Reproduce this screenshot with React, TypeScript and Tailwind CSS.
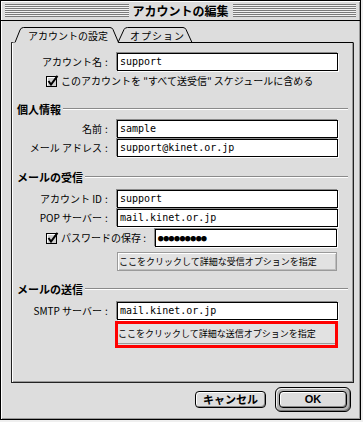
import React from "react";

function Stripes() {
  return (
    <div className="flex-1 h-[13px] [background-image:repeating-linear-gradient(to_bottom,#7a7a7a_0px,#7a7a7a_1px,#f2f2f2_1px,#f2f2f2_2px)]" />
  );
}

function Check() {
  return (
    <svg width="13" height="13" viewBox="0 0 13 13" className="shrink-0">
      <rect x="0.5" y="1.5" width="10" height="10" fill="#cfcfcf" stroke="#000" />
      <path d="M1.5 2.5 H9.5 M1.5 2.5 V10.5" stroke="#fff" />
      <path d="M2.5 6 L5 9.5 L11.5 0.8" fill="none" stroke="#000" strokeWidth="2" />
    </svg>
  );
}

function Input({ value, w }: { value: string; w: string }) {
  return (
    <div
      className={
        w +
        " h-[18px] bg-white border border-black shadow-[-1px_-1px_0_#8a8a8a,1px_1px_0_#ffffff] pl-[2px] flex items-center text-[10px] leading-none [font-family:'DejaVu_Sans_Mono',monospace]"
      }
    >
      {value}
    </div>
  );
}

function Field({ label, value, cls }: { label: string; value: string; cls: string }) {
  return (
    <div className={"flex items-center h-[18px] " + cls}>
      <div className="w-[105px] pr-[7px] flex items-center justify-end text-[10px] leading-none whitespace-nowrap">
        <span>{label}</span>
        <span className="w-[7px] ml-[1px] text-center">:</span>
      </div>
      <Input value={value} w="w-[221px]" />
    </div>
  );
}

function Heading({ text, cls }: { text: string; cls: string }) {
  return (
    <div className={"flex items-center h-[16px] pl-[5px] pr-[5px] " + cls}>
      <span className="text-[11px] font-bold leading-none whitespace-nowrap">{text}</span>
      <div className="flex-1 ml-[2px] h-[2px] border-t border-[#8a8a8a] border-b border-b-white" />
    </div>
  );
}

export default function App() {
  return (
    <div className="w-[363px] h-[422px] bg-[#efefef] text-black [font-family:'Noto_Sans_CJK_JP',sans-serif]">
      <div className="w-[361px] h-[420px] border border-black bg-[#dddddd] flex flex-col shadow-[inset_1px_1px_0_#ffffff,inset_-1px_-1px_0_#999999]">
        {/* title bar */}
        <div className="h-[20px] border-b border-black flex items-center gap-[4px] px-[4px] shrink-0">
          <Stripes />
          <span className="text-[12px] font-bold leading-none">アカウントの編集</span>
          <Stripes />
        </div>

        {/* body */}
        <div className="flex-1 flex flex-col pl-[10px] pr-[6px] pt-[5px]">
          {/* tabs */}
          <div className="relative h-[17px] w-[343px] shrink-0">
            <svg width="343" height="17" viewBox="0 0 343 17" className="absolute inset-0">
              <path
                d="M107 16.5 L113 3.5 Q114 1.5 116.5 1.5 L172 1.5 Q174 1.5 175 3.5 L181 16.5"
                fill="#dddddd"
                stroke="#000"
              />
              <path d="M107 16.5 H342.5" stroke="#000" />
              <path d="M0.5 17 V16.5 H4 L9 4 Q10 1.5 12.5 1.5 L99 1.5 Q101 1.5 102 3.5 L107.5 16.5" fill="#dddddd" stroke="#000" />
              <path d="M1.5 17 H4.5" stroke="#fff" />
            </svg>
            <div className="relative flex items-center h-[17px] pt-[2px] text-[10px] leading-none">
              <span className="ml-[17px] w-[80px] whitespace-nowrap">アカウントの設定</span>
              <span className="ml-[22px] whitespace-nowrap tracking-[1px]">オプション</span>
            </div>
          </div>

          {/* panel */}
          <div className="w-[343px] h-[340px] shrink-0 border-x border-b border-[#222222] flex flex-col shadow-[inset_1px_0_0_#ffffff,inset_-1px_-1px_0_#9a9a9a]">
            <Field label="アカウント名" value="support" cls="mt-[10px]" />
            <div className="flex items-center h-[16px] mt-[2px] pl-[34px]">
              <Check />
              <span className="ml-[2px] text-[10px] leading-none whitespace-nowrap">
                このアカウントを "すべて送受信" スケジュールに含める
              </span>
            </div>

            <Heading text="個人情報" cls="mt-[12px]" />
            <Field label="名前" value="sample" cls="mt-[3px]" />
            <Field label="メール アドレス" value="support@kinet.or.jp" cls="mt-[1px]" />

            <Heading text="メールの受信" cls="mt-[12px]" />
            <Field label="アカウント ID" value="support" cls="mt-[5px]" />
            <Field label="POP サーバー" value="mail.kinet.or.jp" cls="mt-[1px]" />
            <div className="flex items-center h-[18px] mt-[2px] pl-[34px]">
              <Check />
              <span className="w-[96px] pl-[2px] text-[10px] leading-none whitespace-nowrap">パスワードの保存 :</span>
              <div className="w-[182px] h-[18px] bg-white border border-black shadow-[-1px_-1px_0_#8a8a8a,1px_1px_0_#ffffff] pl-[2px] flex items-center text-[9px] leading-none [font-family:'DejaVu_Sans_Mono',monospace]">
                ●●●●●●●●●
              </div>
            </div>
            <div className="mt-[5px] pl-[105px]">
              <div className="w-[220px] h-[19px] bg-[#e2e2e2] border border-[#9a9a9a] shadow-[inset_1px_1px_0_#ffffff,inset_-1px_-1px_0_#bdbdbd] flex items-center pl-[1px] text-[9px] leading-none whitespace-nowrap">
                ここをクリックして詳細な受信オプションを指定
              </div>
            </div>

            <Heading text="メールの送信" cls="mt-[10px]" />
            <Field label="SMTP サーバー" value="mail.kinet.or.jp" cls="mt-[5px]" />
            <div className="mt-[1px] pl-[103px]">
              <div className="w-[223px] h-[27px] border-[3px] border-[#ff0000] bg-[#dddddd] flex flex-col">
                <div className="h-[20px] bg-[#e2e2e2] border-b border-[#9a9a9a] flex items-center text-[9px] leading-none whitespace-nowrap">
                  ここをクリックして詳細な送信オプションを指定
                </div>
              </div>
            </div>
          </div>

          {/* buttons */}
          <div className="flex items-center justify-end gap-[9px] pr-[3px] mt-[4px]">
            <div className="w-[71px] h-[17px] rounded-[4px] border border-black bg-[#dddddd] shadow-[inset_1px_1px_0_#ffffff,inset_-1px_-1px_0_#888888] flex items-center justify-center text-[11px] font-bold leading-none">
              キャンセル
            </div>
            <div className="w-[76px] h-[25px] rounded-[6px] border border-black bg-[#b4b4b4] shadow-[inset_1px_1px_0_#eeeeee,inset_-1px_-1px_0_#777777] p-[3px]">
              <div className="w-full h-full rounded-[4px] border border-black bg-[#dddddd] shadow-[inset_1px_1px_0_#ffffff,inset_-1px_-1px_0_#888888] flex items-center justify-center text-[11px] font-bold leading-none [font-family:'Liberation_Sans',sans-serif]">
                OK
              </div>
            </div>
          </div>
        </div>
      </div>
    </div>
  );
}
